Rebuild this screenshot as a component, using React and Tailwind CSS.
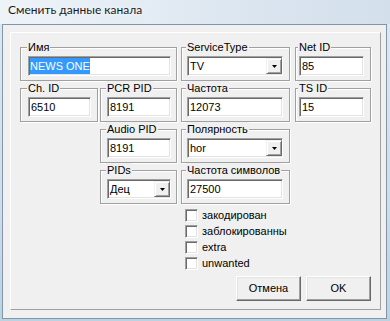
import React from "react";

// sunken edit box, classic windows look
const Field = ({ value, w, selected }) => (
  <div
    className={`h-[20px] ${w} border border-t-[#a0a0a0] border-l-[#a0a0a0] border-r-white border-b-white bg-white shadow-[inset_1px_1px_0_#696969,inset_-1px_-1px_0_#e3e3e3] pl-[1px] pt-[1px] leading-[16px] whitespace-nowrap overflow-hidden`}
  >
    {selected ? (
      <span className="inline-block h-[16px] leading-[16px] bg-[#3399ff] text-white">{value}</span>
    ) : (
      <span className="pl-[1px]">{value}</span>
    )}
  </div>
);

const Combo = ({ value, w }) => (
  <div
    className={`h-[20px] ${w} flex items-center border border-t-[#a0a0a0] border-l-[#a0a0a0] border-r-white border-b-white bg-white shadow-[inset_1px_1px_0_#696969,inset_-1px_-1px_0_#e3e3e3]`}
  >
    <div className="flex-1 pl-[2px] leading-[16px] whitespace-nowrap">{value}</div>
    <div className="w-[16px] h-[16px] flex items-center justify-center bg-[#f0f0f0] border border-t-[#f0f0f0] border-l-[#f0f0f0] border-r-[#696969] border-b-[#696969] shadow-[inset_1px_1px_0_#fff,inset_-1px_-1px_0_#a0a0a0]">
      <svg width="5" height="3" viewBox="0 0 5 3">
        <polygon points="0,0 5,0 2.5,3" fill="#000" />
      </svg>
    </div>
  </div>
);

const Group = ({ label, className, children }) => (
  <div
    className={`mt-[7px] h-[34px] border border-[#a0a0a0] shadow-[inset_1px_1px_0_#fff,1px_1px_0_#fff] ${className}`}
  >
    <div className="-mt-[8px] h-[14px] leading-[14px] flex">
      <span className="bg-[#f0f0f0] px-[1px] -ml-[1px] whitespace-nowrap">{label}</span>
    </div>
    <div className="mt-[2px]">{children}</div>
  </div>
);

const Check = ({ label }) => (
  <div className="h-[16px] flex items-center">
    <div className="w-[13px] h-[13px] border border-t-[#a0a0a0] border-l-[#a0a0a0] border-r-white border-b-white bg-white shadow-[inset_1px_1px_0_#696969,inset_-1px_-1px_0_#e3e3e3]" />
    <div className="ml-[4px] w-[85px] overflow-hidden whitespace-nowrap leading-[14px]">{label}</div>
  </div>
);

const Button = ({ children }) => (
  <div className="w-[65px] h-[25px] flex items-center justify-center bg-[#f0f0f0] border border-t-white border-l-white border-r-[#696969] border-b-[#696969] shadow-[inset_-1px_-1px_0_#a0a0a0,inset_1px_1px_0_#e3e3e3]">
    {children}
  </div>
);

export default function App() {
  return (
    <div className="w-[390px] h-[321px] overflow-hidden bg-[linear-gradient(180deg,#dde8f2_0%,#cfdeec_60%,#b9d3e3_100%)] font-['Liberation_Sans',Arial,sans-serif] text-[11px] text-black">
      {/* title bar */}
      <div className="h-[24px] pl-[8px] pt-[2px] bg-[linear-gradient(90deg,#eef3f8_0%,#e4ecf4_35%,#d9e4ef_70%,#d3dfeb_100%)]">
        <div className="font-['Lato','Noto_Sans',sans-serif] text-[12px] leading-[16px] text-[#1b1b1b] [text-shadow:0_0_6px_#fff]">
          Сменить данные канала
        </div>
      </div>

      {/* client area */}
      <div className="ml-[2px] w-[385px] h-[295px] border border-[#8495a8] bg-[#f0f0f0] pl-[7px] pt-[7px]">
        <div className="w-[371px] h-[278px] border border-t-white border-l-white border-r-[#a0a0a0] border-b-[#a0a0a0] pl-[9px] pt-[7px]">
          <div className="flex">
            <Group label="Имя" className="w-[157px] pl-[7px]">
              <Field value="NEWS ONE" w="w-[143px]" selected />
            </Group>
            <Group label="ServiceType" className="ml-[4px] w-[109px] pl-[5px]">
              <Combo value="TV" w="w-[96px]" />
            </Group>
            <Group label="Net ID" className="ml-[5px] w-[76px] pl-[3px]">
              <Field value="85" w="w-[65px]" />
            </Group>
          </div>

          <div className="flex">
            <Group label="Ch. ID" className="w-[78px] pl-[7px]">
              <Field value="6510" w="w-[63px]" />
            </Group>
            <Group label="PCR PID" className="ml-[2px] w-[77px] pl-[6px]">
              <Field value="8191" w="w-[64px]" />
            </Group>
            <Group label="Частота" className="ml-[4px] w-[109px] pl-[5px]">
              <Field value="12073" w="w-[96px]" />
            </Group>
            <Group label="TS ID" className="ml-[5px] w-[76px] pl-[3px]">
              <Field value="15" w="w-[65px]" />
            </Group>
          </div>

          <div className="flex ml-[80px]">
            <Group label="Audio PID" className="w-[77px] pl-[6px]">
              <Field value="8191" w="w-[64px]" />
            </Group>
            <Group label="Полярность" className="ml-[4px] w-[109px] pl-[5px]">
              <Combo value="hor" w="w-[96px]" />
            </Group>
          </div>

          <div className="flex ml-[80px]">
            <Group label="PIDs" className="w-[77px] pl-[6px]">
              <Combo value="Дец" w="w-[64px]" />
            </Group>
            <Group label="Частота символов" className="ml-[4px] w-[109px] pl-[5px]">
              <Field value="27500" w="w-[96px]" />
            </Group>
          </div>

          <div className="ml-[165px] mt-[3px]">
            <Check label="закодирован" />
            <Check label="заблокированный" />
            <Check label="extra" />
            <Check label="unwanted" />
          </div>

          <div className="ml-[216px] mt-[5px] flex gap-[5px]">
            <Button>Отмена</Button>
            <Button>OK</Button>
          </div>
        </div>
      </div>
    </div>
  );
}
